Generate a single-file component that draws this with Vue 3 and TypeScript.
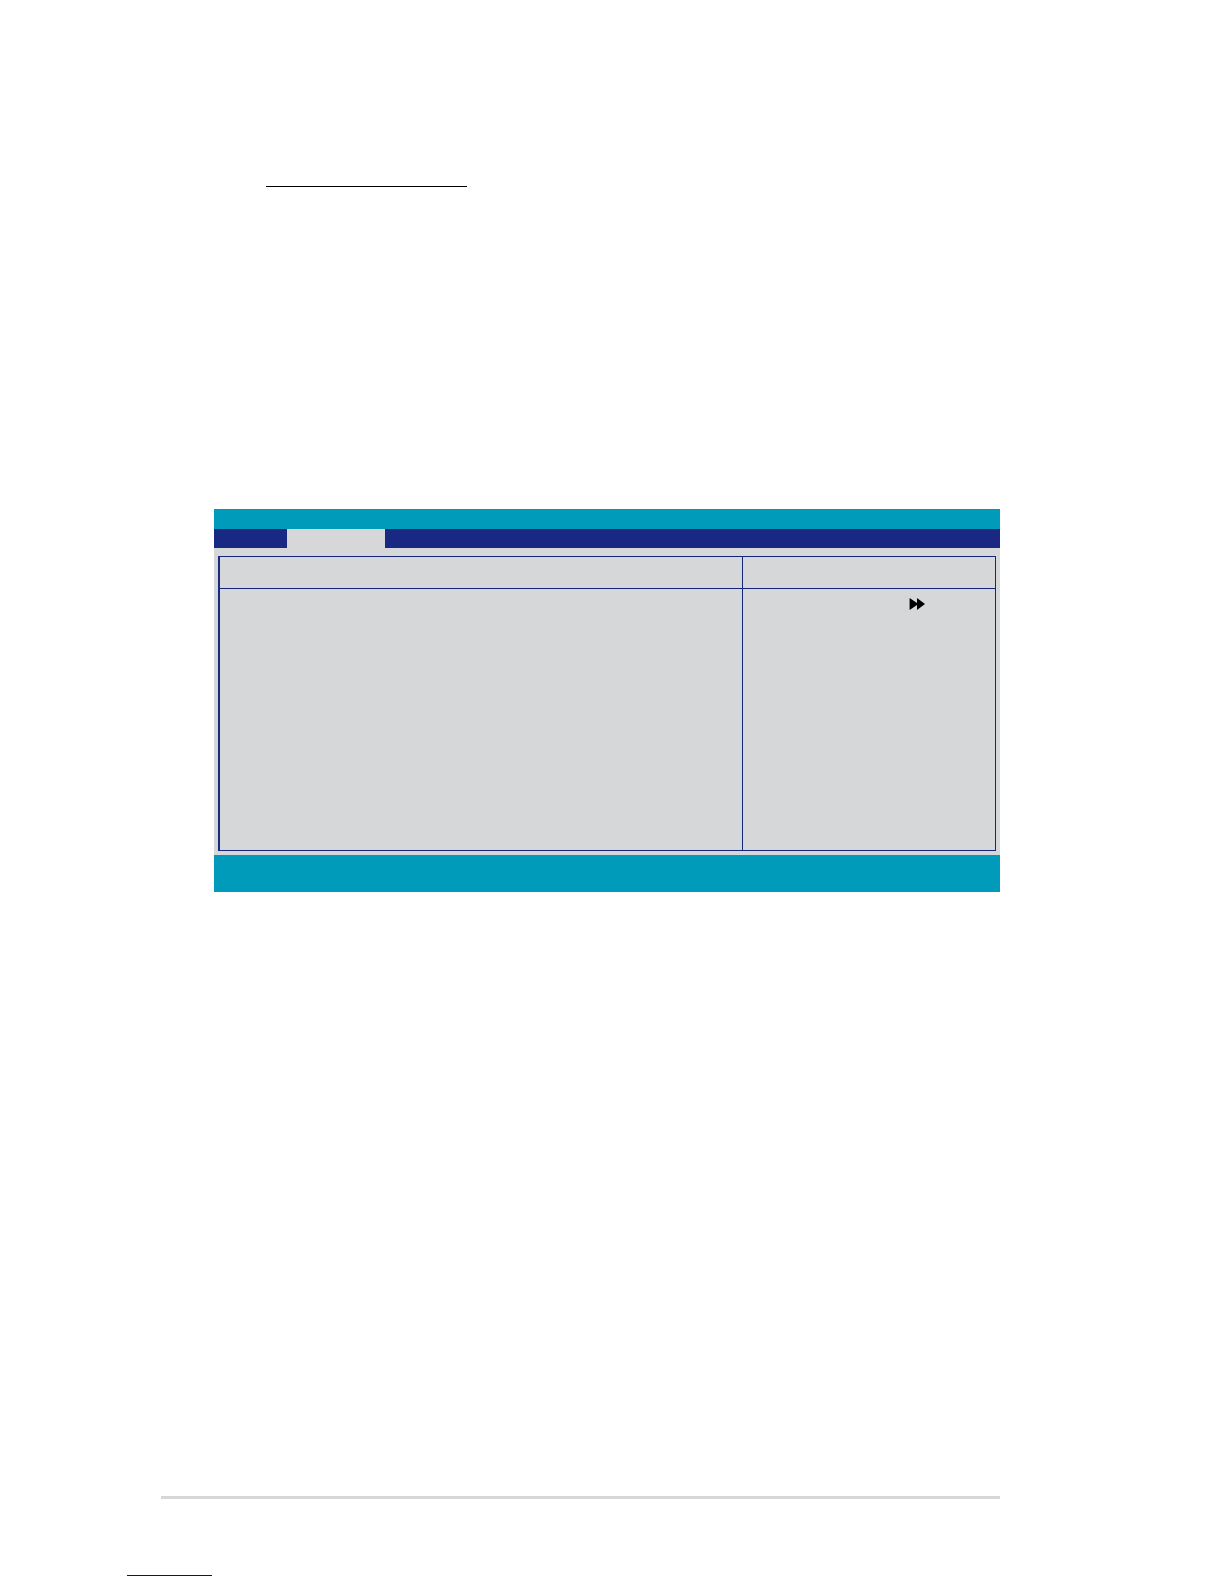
<script setup lang="ts">
const panes: string[] = ['options', 'help']
</script>

<template>
  <main class="page">
    <div class="heading-rule"></div>

    <section class="bios">
      <div class="title-bar"></div>
      <div class="menu-bar">
        <div class="active-tab"></div>
      </div>
      <div class="body">
        <div class="frame">
          <div v-for="pane in panes" :key="pane" class="pane" :class="pane">
            <div class="pane-head"></div>
            <div class="pane-body">
              <svg v-if="pane === 'help'" class="forward" viewBox="0 0 16 12" aria-hidden="true">
                <path d="M0.6 0 L8 5 V0 L16 6 L8 12 V7 L0.6 12 Z" />
              </svg>
            </div>
          </div>
        </div>
      </div>
      <div class="legend-bar"></div>
    </section>

    <div class="footer-rule"></div>
    <div class="link-rule"></div>
  </main>
</template>

<style>
body {
  margin: 0;
  background: #ffffff;
}
</style>

<style scoped>
.page {
  box-sizing: border-box;
  display: flex;
  flex-direction: column;
  min-height: 100vh;
  padding: 186px 224px 8px 127px;
  font-family: "Liberation Sans", Arial, sans-serif;
}

.heading-rule {
  width: 201px;
  height: 1px;
  margin-left: 139px;
  background: #000000;
}

.bios {
  margin: 322px 0 0 87px;
  background: #d5d7d8;
}

.title-bar {
  height: 20px;
  background: #009bbb;
}

.menu-bar {
  display: flex;
  height: 19px;
  padding-left: 73px;
  background: #182883;
}

.active-tab {
  width: 98px;
  background: #d5d7d8;
}

.body {
  padding: 8px 4px 4px;
}

.frame {
  display: grid;
  grid-template-columns: 1fr 253px;
  border: 1px solid #14267c;
  border-left: 2px solid #182883;
}

.help {
  border-left: 1px solid #14267c;
}

.pane-head {
  height: 31px;
  border-bottom: 1px solid #14267c;
}

.pane-body {
  display: flex;
  justify-content: flex-end;
  align-items: flex-start;
  box-sizing: border-box;
  min-height: 261px;
  padding: 9px 70px 0 0;
}

.forward {
  width: 16px;
  height: 12px;
  fill: #000000;
}

.legend-bar {
  height: 37px;
  background: #009bbb;
}

.footer-rule {
  height: 3px;
  margin: 604px 0 0 34px;
  background: #d7d7d7;
}

.link-rule {
  width: 85px;
  height: 1px;
  margin-top: 76px;
  background: #0a0a8c;
}
</style>
